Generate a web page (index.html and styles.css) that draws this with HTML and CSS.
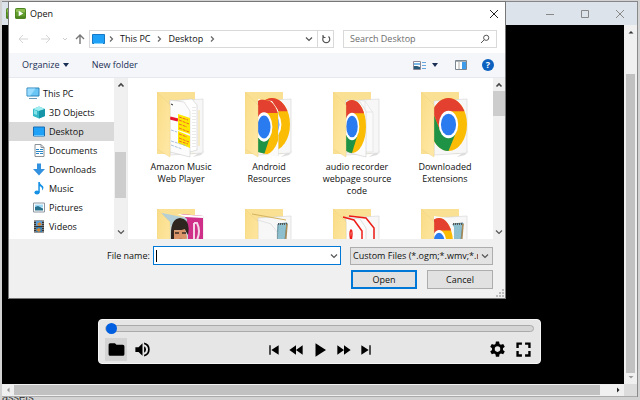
FILE: index.html
```
<!DOCTYPE html>
<html lang="en">
<head>
  <meta charset="UTF-8" />
  <meta name="viewport" content="width=device-width, initial-scale=1.0" />
  <title>Open</title>
  <link rel="stylesheet" href="styles.css">
</head>
<body>

  <!-- Shared shapes -->
  <svg class="defs" aria-hidden="true">
    <defs>
      <symbol id="chrome" viewBox="2 2 44 44" preserveAspectRatio="none">
        <circle cx="24" cy="24" r="22" fill="#fbbc05"/>
        <path d="M4.9 13A22 22 0 0 0 24 46L33.5 29.5 24 24 14.5 29.5z" fill="#1e9245"/>
        <path d="M4.9 13A22 22 0 0 1 43 13H24v11l-9.5 5.5z" fill="#e3402f"/>
        <circle cx="24" cy="24" r="11.5" fill="#fff"/>
        <circle cx="24" cy="24" r="9" fill="#2a7af0"/>
      </symbol>
      <symbol id="app" viewBox="0 0 12 12">
        <rect width="12" height="12" rx="2" fill="#4d8520"/>
        <path d="M1 2q0-1 1-1h8q1 0 1 1v3H1z" fill="#8bbd51"/>
        <path d="M1 5h10v4H1z" fill="#629c2d"/>
        <path d="M4 3v6l5-3z" fill="#fff"/>
      </symbol>
      <linearGradient id="flapFill" x1="0" x2="1" y1="0" y2="1">
        <stop offset="0" stop-color="#f9dc86"/>
        <stop offset="1" stop-color="#ffe9a8"/>
      </linearGradient>
      <symbol id="folderBack" viewBox="0 0 48 67">
        <path d="M40 62l7-3-3 4-8 2z" fill="#ddd"/>
        <path d="M0 0h38v62H0z" fill="#f9e093"/>
        <path d="M13 9l33-2v54l-33 2z" fill="#f7f7f7" stroke="#d5d5d5" stroke-width=".6"/>
      </symbol>
      <symbol id="folderFlap" viewBox="0 0 48 67">
        <path d="M0 0l13 13v52L0 57z" fill="url(#flapFill)" stroke="#ecd080" stroke-width=".4"/>
      </symbol>
      <symbol id="page" viewBox="0 0 48 67">
        <path d="M13 8l14 2 6 9v46l-20-5z" fill="#fcfcfc" stroke="#ccc" stroke-width=".6"/>
      </symbol>
      <clipPath id="pageClip"><path d="M13 7l14 2 6 9v47l-20-5z"/></clipPath>
      <clipPath id="backClip"><path d="M13 4h33v57l-33 2z"/></clipPath>
      <symbol id="chevUp" viewBox="0 0 8 8"><path d="M1.5 5.5L4 3l2.5 2.5" fill="none" stroke="#444" stroke-width="1.6"/></symbol>
      <symbol id="chevDown" viewBox="0 0 8 8"><path d="M1 2.500L4 5.500l3-3" fill="none" stroke="#555" stroke-width="1.200"/></symbol>
      <symbol id="chevRight" viewBox="0 0 8 8"><path d="M3 1.500L5.500 4 3 6.500" fill="none" stroke="#666" stroke-width="1.200"/></symbol>
    </defs>
  </svg>

  <!-- Player window -->
  <div class="window">
    <header class="window-title">
      <svg class="app-icon"><use href="#app"/></svg>
      <button type="button" aria-label="Minimize"><svg viewBox="0 0 10 10"><path d="M1 5.500h8"/></svg></button>
      <button type="button" aria-label="Maximize"><svg viewBox="0 0 10 10"><path d="M1.500 1.500h7v7h-7z"/></svg></button>
      <button type="button" aria-label="Close window"><svg viewBox="0 0 10 10"><path d="M1 1l8 8M9 1L1 9"/></svg></button>
    </header>

    <div class="window-main">
      <main class="stage">
        <div class="player">
          <input class="seek" type="range" min="0" max="100" value="0" aria-label="Seek">
          <div class="controls">
            <div class="group">
              <button type="button" class="selected" aria-label="Open file"><svg viewBox="0 0 24 24"><path d="M10 4H4a2 2 0 0 0-2 2v12a2 2 0 0 0 2 2h16a2 2 0 0 0 2-2V8a2 2 0 0 0-2-2h-8z"/></svg></button>
              <button type="button" aria-label="Volume"><svg viewBox="0 0 24 24"><path d="M3 9v6h4l5 5V4L7 9zm13.500 3A4.500 4.500 0 0 0 14 8v8a4.500 4.500 0 0 0 2.500-4zM14 3.200v2.100a7 7 0 0 1 0 13.400v2.100a9 9 0 0 0 0-17.600z"/></svg></button>
            </div>
            <div class="group transport">
              <button type="button" aria-label="Previous"><svg viewBox="0 0 24 24"><path d="M5 5h2v14H5zM19 5v14L8 12z"/></svg></button>
              <button type="button" aria-label="Rewind"><svg viewBox="0 0 24 24"><path d="M12 5v14L2 12zM22 5v14l-10-7z"/></svg></button>
              <button type="button" class="play" aria-label="Play"><svg viewBox="0 0 24 24"><path d="M6 3v18l14-9z"/></svg></button>
              <button type="button" aria-label="Fast forward"><svg viewBox="0 0 24 24"><path d="M2 5v14l10-7zM12 5v14l10-7z"/></svg></button>
              <button type="button" aria-label="Next"><svg viewBox="0 0 24 24"><path d="M5 5v14l11-7zM17 5h2v14h-2z"/></svg></button>
            </div>
            <div class="group end">
              <button type="button" aria-label="Settings"><svg viewBox="0 0 24 24"><path fill-rule="evenodd" d="M10 2h4l.6 3 1.700 1 2.900-1 2 3.500-2.300 2v2l2.300 2-2 3.500-2.900-1-1.700 1-.6 3h-4l-.6-3-1.700-1-2.900 1-2-3.500 2.300-2v-2l-2.300-2 2-3.500 2.900 1 1.700-1zM12 8a3.500 3.500 0 1 0 0 7 3.500 3.500 0 0 0 0-7z"/></svg></button>
              <button type="button" aria-label="Full screen"><svg viewBox="0 0 24 24"><path d="M3 3h7v3H6v4H3zM14 3h7v7h-3V6h-4zM3 14h3v4h4v3H3zM18 14h3v7h-7v-3h4z"/></svg></button>
            </div>
          </div>
        </div>
      </main>
      <div class="scroll window-scroll">
        <svg viewBox="0 0 8 8"><path d="M1.500 5.500h5L4 3z" fill="#333"/></svg>
        <div class="track"><div class="thumb"></div></div>
        <svg viewBox="0 0 8 8"><path d="M1.500 3h5L4 5.500z" fill="#999"/></svg>
      </div>
    </div>

    <div class="window-bottom">
      <svg viewBox="0 0 8 8"><path d="M5.500 1.500v5L3 4z" fill="#999"/></svg>
      <div class="hthumb"></div>
      <svg viewBox="0 0 8 8"><path d="M3 1.500v5L5.500 4z" fill="#222"/></svg>
      <div class="corner"></div>
    </div>
  </div>
  <footer class="behind">assets</footer>

  <!-- Open dialog -->
  <form class="dialog" role="dialog" aria-labelledby="dialogTitle">
    <header class="dialog-title">
      <svg class="app-icon"><use href="#app"/></svg>
      <span id="dialogTitle">Open</span>
      <button type="button" class="close" aria-label="Close"><svg viewBox="0 0 10 10"><path d="M1 1l8 8M9 1L1 9" stroke="#222" fill="none"/></svg></button>
    </header>

    <nav class="nav">
      <button type="button" class="arrow" aria-label="Back"><svg viewBox="0 0 12 12"><path d="M11 6H2M6 2L2 6l4 4" stroke="#d5d5d5"/></svg></button>
      <button type="button" class="arrow" aria-label="Forward"><svg viewBox="0 0 12 12"><path d="M1 6h9M6 2l4 4-4 4" stroke="#d5d5d5"/></svg></button>
      <button type="button" class="recent" aria-label="Recent locations"><svg viewBox="0 0 12 12"><path d="M4 5l2 2 2-2" stroke="#ccc"/></svg></button>
      <button type="button" class="up" aria-label="Up"><svg viewBox="0 0 12 12"><path d="M6 11V2M2 6l4-4 4 4" stroke="#777" stroke-width="1.400"/></svg></button>
      <div class="address">
        <svg class="monitor" viewBox="0 0 13 11"><path d="M.5.5h12v9H.5z" fill="#1ea1f7" stroke="#1679c5"/><path d="M2 9.500h9" stroke="#84d3ff"/></svg>
        <svg class="chev"><use href="#chevRight"/></svg>
        <a href="#this-pc">This PC</a>
        <svg class="chev"><use href="#chevRight"/></svg>
        <a href="#desktop">Desktop</a>
        <svg class="chev"><use href="#chevRight"/></svg>
        <button type="button" class="history" aria-label="Previous locations"><svg class="chev"><use href="#chevDown"/></svg></button>
        <button type="button" class="refresh" aria-label="Refresh"><svg viewBox="0 0 10 10"><path d="M7.500 2.500a3.500 3.500 0 1 1-4.500 0M2 1v2.500h2.500" fill="none" stroke="#555" stroke-width="1.200"/></svg></button>
      </div>
      <div class="search">
        <input type="search" placeholder="Search Desktop" aria-label="Search Desktop">
        <svg viewBox="0 0 10 10"><circle cx="6.200" cy="3.800" r="2.600"/><path d="M4.200 5.800L1 9"/></svg>
      </div>
    </nav>

    <div class="toolbar">
      <button type="button">Organize <svg class="caret" viewBox="0 0 6 4"><path d="M0 0h6L3 4z"/></svg></button>
      <button type="button">New folder</button>
      <button type="button" class="view" aria-label="Change view">
        <svg class="view-icon" viewBox="0 0 13 9"><path d="M.5.500h7v8h-7z" fill="#fff" stroke="#889"/><path d="M1 2h6v2H1z" fill="#79b7e8"/><path d="M1 5h3l3 1v2H1z" fill="#265a78"/><path d="M9 1.500h4M9 4.500h4M9 7.500h4" stroke="#68a5dc"/></svg>
        <svg class="caret" viewBox="0 0 6 4"><path d="M0 0h6L3 4z"/></svg>
      </button>
      <button type="button" aria-label="Preview pane"><svg class="pane-icon" viewBox="0 0 12 10"><path d="M.5.500h11v9H.500z" fill="#fff" stroke="#7d8792"/><path d="M1 1h10v1H1z" fill="#a8b0b8"/><path d="M4 2v7" stroke="#aaa"/><path d="M7 2h4v7H7z" fill="#3d9bea"/></svg></button>
      <button type="button" class="help" aria-label="Help">?</button>
    </div>

    <div class="browser">
      <ul class="tree">
        <li class="root"><svg viewBox="0 0 14 13"><path d="M1 1h12v8H1z" fill="#6cc6f5" stroke="#2b83b8"/><path d="M1.500 1.500h8l-5 7h-3z" fill="#9adcff"/><path d="M3 11.500h8" stroke="#6798b8"/></svg><a href="#this-pc">This PC</a></li>
        <li><svg viewBox="0 0 14 13"><path d="M1 3l6-2.500L13 3v7l-6 2.500L1 10z" fill="#34b9c9"/><path d="M1 3l6-2.500L13 3 7 5z" fill="#a1eef0"/><path d="M7 5l6-2v7l-6 2.500z" fill="#1694a8"/><path d="M2 4l3 1v4L2 8z" fill="#83e3e8"/></svg><a href="#3d-objects">3D Objects</a></li>
        <li class="current"><svg viewBox="0 0 14 13"><path d="M1.500 2h11v9h-11z" fill="#1ea1f7" stroke="#176eb5"/><path d="M2 10.500h10" stroke="#6bc4f9"/></svg><a href="#desktop">Desktop</a></li>
        <li><svg viewBox="0 0 14 13"><path d="M3 .5h6l3 3v9H3z" fill="#fff" stroke="#8a9298"/><path d="M9 .500v3h3" fill="none" stroke="#8a9298"/><path d="M4 5.500h3M8 5.500h3M4 7.500h7M4 9.500h3M8 9.500h3" stroke="#2585c5"/></svg><a href="#documents">Documents</a></li>
        <li><svg viewBox="0 0 14 13"><path d="M5 .500h4V6h4l-6 6.500L1 6h4z" fill="#3392df"/></svg><a href="#downloads">Downloads</a></li>
        <li><svg viewBox="0 0 14 13"><ellipse cx="5" cy="10.500" rx="2.600" ry="2" fill="#1490e4"/><path d="M6.300 10.500V0h1.500q0 2 2 3.200Q13 5 10 8.500 10.700 5 7.800 4.300v6.200z" fill="#1490e4"/></svg><a href="#music">Music</a></li>
        <li><svg viewBox="0 0 14 13"><path d="M1.500 2h11v9h-11z" fill="#fff" stroke="#8c969e"/><path d="M3 3.500h8v3H3z" fill="#a1daf6"/><path d="M3 6l3-1 5 2.500v2H3z" fill="#26718c"/></svg><a href="#pictures">Pictures</a></li>
        <li><svg viewBox="0 0 14 13"><path d="M2 .5h10v12H2z" fill="#333"/><path d="M4 1h6v5H4z" fill="#5aa0dc"/><path d="M4 7h6v5H4z" fill="#3681b8"/><path d="M5 4l3-2 2 3-3 1zM4 10l3-2 2 2-2 2z" fill="#d88632"/><path d="M3 1v11M11 1v11" stroke="#ccc" stroke-dasharray="1 1"/></svg><a href="#videos">Videos</a></li>
      </ul>
      <div class="scroll tree-scroll">
        <svg><use href="#chevUp"/></svg>
        <div class="track"><div class="thumb"></div></div>
        <svg><use href="#chevDown"/></svg>
      </div>

      <ul class="files">
        <li>
          <svg viewBox="0 0 48 67">
            <use href="#folderBack"/>
            <path d="M14 9l21-2 5 6v45l-7 2z" fill="#fff" stroke="#ccc" stroke-width=".6"/>
            <path d="M36 15v42M38 15v42" stroke="#bbb" stroke-width=".6" stroke-dasharray="1 2"/>
            <path d="M42 18v36" stroke="#f3df9c"/>
            <use href="#page"/>
            <path d="M14 12l2 1" stroke="#222"/>
            <path d="M13 26l8 2" stroke="#e61931" stroke-width="3"/>
            <path d="M21 22l12 4v16l-12-4zM21 39l12 5v12l-12-5z" fill="#fee600"/>
            <path d="M22 25l9 3M22 28l10 4M22 32l8 3M22 36l10 4M22 42l8 3M22 46l10 4M22 49l9 3" stroke="#f0672c" stroke-dasharray="3 1"/>
            <path d="M14 38l6 2M14 49l16 5M14 53l11 4" stroke="#8daad0" stroke-width=".7" stroke-dasharray="3 1"/>
            <use href="#folderFlap"/>
          </svg>
          <span>Amazon Music Web Player</span>
        </li>
        <li>
          <svg viewBox="0 0 48 67">
            <use href="#folderBack"/>
            <g clip-path="url(#backClip)"><use href="#chrome" x="9" y="6" width="36" height="53"/></g>
            <path d="M33 19v45" stroke="#ddd"/>
            <g clip-path="url(#pageClip)"><path d="M13 7h20v59H13z" fill="#fafafa"/><use href="#chrome" x="3" y="7" width="32" height="56"/></g>
            <use href="#folderFlap"/>
          </svg>
          <span>Android Resources</span>
        </li>
        <li>
          <svg viewBox="0 0 48 67">
            <use href="#folderBack"/>
            <path d="M14 8l18 1 8 12v39H14z" fill="#fafafa" stroke="#ddd" stroke-width=".6"/>
            <path d="M32 9v11h8" fill="none" stroke="#ddd" stroke-width=".6"/>
            <use href="#page"/>
            <g clip-path="url(#pageClip)"><use href="#chrome" x="5" y="8" width="28" height="53"/></g>
            <use href="#folderFlap"/>
          </svg>
          <span>audio recorder webpage source code</span>
        </li>
        <li>
          <svg viewBox="0 0 48 67">
            <use href="#folderBack"/>
            <g clip-path="url(#backClip)"><use href="#chrome" x="9" y="6" width="37" height="53"/></g>
            <use href="#folderFlap"/>
          </svg>
          <span>Downloaded Extensions</span>
        </li>
        <li>
          <svg viewBox="0 0 48 67">
            <use href="#folderBack"/>
            <path d="M5 4l30 6-2 50-20 3z" fill="#b4d0d6"/>
            <path d="M24 5l22 2v54H30V10z" fill="#cf2f88"/>
            <path d="M20 5l26 2v2l-18-1z" fill="#fff"/>
            <path d="M37 14v17M37 14h3q4 8 0 17h-3" fill="none" stroke="#f3d5e6" stroke-width="2"/>
            <path d="M13 16l18 3v40H13z" fill="#cbdde0"/>
            <path d="M14 24q0-14 9-15 11 1 8 17l-3-5H17v14h-3z" fill="#302620"/>
            <path d="M17 21q6 1 11-1l2 8-2 12H17z" fill="#d99468"/>
            <path d="M18 24h4M25 24h4" stroke="#3d2b24" stroke-width="1.500"/>
            <path d="M18 32q5-4 10-1l-2 6h-6z" fill="#5a3a2d"/>
            <use href="#folderFlap"/>
          </svg>
        </li>
        <li>
          <svg viewBox="0 0 48 67">
            <use href="#folderBack"/>
            <path d="M7 5l34 6" stroke="#d4b35f"/>
            <path d="M33 15l9-1-3 25h-7z" fill="#8ebfce" stroke="#5c8995"/>
            <path d="M33 15h9" stroke="#555" stroke-width="2" stroke-dasharray="1 1"/>
            <path d="M42 15l-2 25" stroke="#a98a55" stroke-width="1.500"/>
            <path d="M13 11l13 4 6 8v35l-19 3z" fill="#f7f7f7" stroke="#ccc" stroke-width=".5"/>
            <use href="#folderFlap"/>
          </svg>
        </li>
        <li>
          <svg viewBox="0 0 48 67">
            <use href="#folderBack"/>
            <path d="M17 7l16 2 8 10v40H17z" fill="#fafafa" stroke="#ddd"/>
            <path d="M16 7l17 2 8 10v20" fill="none" stroke="#ee1c16" stroke-width="1.500"/>
            <use href="#page"/>
            <use href="#folderFlap"/>
            <path d="M10 8l11 3 8 11v20M18 32q-2-9 0-11 2 1 0 11" fill="none" stroke="#ee1c16" stroke-width="1.500"/>
          </svg>
        </li>
        <li>
          <svg viewBox="0 0 48 67">
            <use href="#folderBack"/>
            <path d="M32 15l10-1-3 25h-9z" fill="#8ebfce" stroke="#5c8995"/>
            <path d="M32 15h10" stroke="#555" stroke-width="2" stroke-dasharray="1 1"/>
            <path d="M42 15l-2 25" stroke="#a98a55" stroke-width="1.500"/>
            <g clip-path="url(#pageClip)"><path d="M13 7h20v59H13z" fill="#fafafa"/><use href="#chrome" x="4" y="9" width="28" height="50"/></g>
            <use href="#folderFlap"/>
          </svg>
        </li>
      </ul>
      <div class="scroll file-scroll">
        <svg><use href="#chevUp"/></svg>
        <div class="track"><div class="thumb"></div></div>
        <svg><use href="#chevDown"/></svg>
      </div>
    </div>

    <div class="dialog-footer">
      <div class="field-row">
        <label for="fileName">File name:</label>
        <div class="combo">
          <input type="text" id="fileName" autocomplete="off">
          <button type="button" aria-label="Recent files"><svg class="chev"><use href="#chevDown"/></svg></button>
        </div>
        <div class="filter">
          <select aria-label="File type">
            <option>Custom Files (*.ogm;*.wmv;*.mpg;*.webm)</option>
            <option>All Files (*.*)</option>
          </select>
          <svg class="chev"><use href="#chevDown"/></svg>
        </div>
      </div>
      <div class="button-row">
        <button type="submit" class="primary">Open</button>
        <button type="button">Cancel</button>
      </div>
      <svg class="grip" viewBox="0 0 8 8"><path d="M6 0h2v2H6zM3 3h2v2H3zM6 3h2v2H6zM0 6h2v2H0zM3 6h2v2H3zM6 6h2v2H6z"/></svg>
    </div>
  </form>

</body>
</html>
```
FILE: styles.css
```
* {
  margin: 0;
  padding: 0;
  box-sizing: border-box;
}

body {
  display: flex;
  flex-direction: column;
  height: 100vh;
  padding: 1px 2px 0 2px;
  overflow: hidden;
  background: #d2d2d2;
  color: #111;
  font-family: "Open Sans", "Noto Sans", sans-serif;
  font-size: 9px;
  line-height: 12px;
}

button,
input,
select {
  font: inherit;
  color: inherit;
  border: none;
  background: none;
  outline: none;
}

button {
  display: flex;
  align-items: center;
  justify-content: center;
}

ul {
  list-style: none;
}

a {
  color: inherit;
  text-decoration: none;
}

svg {
  display: block;
  flex: none;
}

.defs {
  position: absolute;
  width: 0;
  height: 0;
}

.chev {
  width: 8px;
  height: 8px;
}

.app-icon {
  width: 11px;
  height: 11px;
}

/* player window */
.window {
  flex: 1;
  display: flex;
  flex-direction: column;
  min-height: 0;
  border-top: 1px solid #85858a;
  border-right: 1px solid #8a8a8a;
}

.window-title {
  display: flex;
  align-items: center;
  height: 23px;
  padding-left: 4px;
  background: #dde3ea;
}

.window-title .app-icon {
  margin-right: auto;
}

.window-title button {
  width: 35px;
}

.window-title button svg {
  width: 10px;
  height: 10px;
  fill: none;
  stroke: #888;
}

.window-main {
  flex: 1;
  display: flex;
  min-height: 0;
}

.stage {
  flex: 1;
  display: flex;
  align-items: flex-end;
  padding: 0 83px 20px 96px;
  background: #000;
}

.scroll {
  display: flex;
  flex-direction: column;
  align-items: center;
  width: 13px;
  padding: 3px 0;
  background: #f0f0f0;
}

.scroll svg {
  width: 8px;
  height: 8px;
}

.track {
  flex: 1;
  align-self: stretch;
}

.thumb {
  background: #cdcdcd;
}

.window-scroll .track {
  padding: 38px 2px 0 2px;
}

.window-scroll .thumb {
  height: 100%;
  background: #c1c1c1;
}

.window-bottom {
  display: flex;
  align-items: center;
  height: 13px;
  border-bottom: 1px solid #aaa;
  background: #f0f0f0;
}

.window-bottom svg {
  width: 8px;
  height: 8px;
  margin: 0 2px;
}

.hthumb {
  flex: 1;
  height: 10px;
  margin-right: 12px;
  background: #c1c1c1;
}

.corner {
  align-self: stretch;
  width: 13px;
  background: #dcdcdc;
}

.behind {
  display: flex;
  align-items: flex-end;
  height: 3px;
  overflow: hidden;
  color: #333;
  font-family: "Liberation Sans", sans-serif;
  font-size: 11px;
  line-height: 6px;
}

/* player controls */
.player {
  flex: 1;
  padding: 4px 6px 2px;
  border: 1px solid #f5f5f5;
  border-radius: 4px;
  background: #e6e6e6;
}

.seek {
  display: block;
  width: 100%;
  height: 9px;
  appearance: none;
}

.seek::-webkit-slider-runnable-track {
  height: 7px;
  border: 1px solid #aaa;
  border-radius: 4px;
  background: #d5d5d5;
}

.seek::-webkit-slider-thumb {
  width: 11px;
  height: 11px;
  margin-top: -3px;
  border-radius: 50%;
  background: #005fe0;
  appearance: none;
}

.controls {
  display: flex;
  justify-content: space-between;
  align-items: center;
  margin-top: 5px;
}

.group {
  display: flex;
  gap: 4px;
}

.group button {
  width: 22px;
  height: 23px;
}

.group svg {
  width: 19px;
  height: 19px;
}

.group .selected {
  background: #d4d4d4;
}

.transport {
  gap: 0;
}

.transport svg {
  width: 16px;
  height: 16px;
}

.transport .play {
  width: 26px;
}

.play svg {
  width: 18px;
  height: 18px;
}

/* open dialog */
.dialog {
  position: absolute;
  top: 1px;
  left: 8px;
  width: calc(100% - 142px);
  border: 1px solid #777;
  background: #fff;
}

.dialog-title {
  display: flex;
  align-items: center;
  gap: 4px;
  height: 23px;
  padding: 0 6px;
}

.close {
  margin-left: auto;
}

.close svg {
  width: 10px;
  height: 10px;
}

.nav {
  display: flex;
  align-items: center;
  height: 28px;
  padding: 0 8px 0 4px;
}

.nav > button svg {
  width: 12px;
  height: 12px;
  fill: none;
}

.arrow {
  width: 23px;
  padding-right: 3px;
}

.recent {
  width: 12px;
}

.up {
  width: 18px;
}

.address {
  flex: 1;
  display: flex;
  align-items: center;
  height: 18px;
  padding-left: 2px;
  border: 1px solid #d9d9d9;
}

.monitor {
  width: 13px;
  height: 11px;
  margin-right: 2px;
}

.address a {
  margin: 0 5px;
}

.history {
  width: 16px;
  margin-left: auto;
}

.refresh {
  align-self: stretch;
  width: 16px;
  border-left: 1px solid #d9d9d9;
}

.refresh svg {
  width: 10px;
  height: 10px;
}

.search {
  display: flex;
  align-items: center;
  width: 154px;
  height: 18px;
  margin-left: 9px;
  padding: 0 6px;
  border: 1px solid #d9d9d9;
}

.search input {
  flex: 1;
  min-width: 0;
}

.search input::placeholder {
  color: #6d6d6d;
}

.search svg {
  width: 10px;
  height: 10px;
  fill: none;
  stroke: #555;
}

.toolbar {
  display: flex;
  align-items: center;
  height: 25px;
  padding: 0 11px 0 13px;
  border-bottom: 1px solid #e5e8ec;
  background: #f4f6f9;
  color: #1b2f55;
}

.toolbar button {
  gap: 3px;
  margin-right: 23px;
}

.caret {
  width: 6px;
  height: 4px;
  fill: #1b2f55;
}

.toolbar .view {
  gap: 6px;
  margin-left: auto;
  margin-right: 17px;
}

.view-icon {
  width: 13px;
  height: 9px;
}

.pane-icon {
  width: 12px;
  height: 10px;
}

.toolbar .help {
  width: 12px;
  height: 12px;
  margin: 0 0 0 -8px;
  border-radius: 50%;
  background: #0c62be;
  color: #fff;
  font-weight: bold;
}

.browser {
  display: flex;
  height: 161px;
  overflow: hidden;
}

.tree {
  width: 105px;
  padding-top: 6px;
}

.tree li {
  display: flex;
  align-items: center;
  gap: 3px;
  height: 19px;
  padding-left: 23px;
  white-space: nowrap;
}

.tree .root {
  padding-left: 17px;
}

.tree .current {
  background: #d9d9d9;
}

.tree svg {
  width: 14px;
  height: 13px;
}

.tree-scroll .track {
  padding: 63px 1px 0;
}

.tree-scroll .thumb {
  height: 46px;
}

.files {
  flex: 1;
  display: grid;
  grid-template-columns: repeat(4, 1fr);
  grid-auto-rows: 117px;
  padding: 14px 4px 0 9px;
  border-left: 1px solid #eee;
}

.files li {
  display: flex;
  flex-direction: column;
  align-items: center;
  gap: 2px;
  text-align: center;
}

.files svg {
  width: 48px;
  height: 67px;
}

.files span {
  max-width: 72px;
}

.file-scroll {
  width: 12px;
}

.file-scroll .track {
  padding-top: 2px;
}

.file-scroll .thumb {
  height: 25px;
}

.dialog-footer {
  position: relative;
  padding: 7px 12px 9px 98px;
  background: #f0f0f0;
}

.field-row {
  display: flex;
  align-items: center;
}

.combo {
  flex: 1;
  display: flex;
  align-items: center;
  height: 19px;
  margin: 0 9px 0 3px;
  border: 1px solid #0078d7;
  background: #fff;
}

/* text cursor */
.combo::before {
  content: "";
  width: 1px;
  height: 12px;
  margin-left: 2px;
  background: #000;
}

.combo input {
  flex: 1;
  min-width: 0;
  caret-color: transparent;
}

.combo button {
  width: 13px;
}

.filter {
  display: flex;
  align-items: center;
  width: 143px;
  height: 18px;
  padding: 0 3px 0 2px;
  border: 1px solid #adadad;
  background: #e3e3e3;
}

.filter select {
  flex: 1;
  min-width: 0;
  overflow: hidden;
  margin-right: 3px;
  appearance: none;
}

.button-row {
  display: flex;
  justify-content: flex-end;
  gap: 10px;
  margin-top: 5px;
}

.button-row button {
  width: 66px;
  height: 19px;
  border: 1px solid #adadad;
  background: #e1e1e1;
}

.button-row .primary {
  border: 2px solid #0078d7;
}

.grip {
  position: absolute;
  right: 1px;
  bottom: 1px;
  width: 8px;
  height: 8px;
  fill: #bbb;
}
```
